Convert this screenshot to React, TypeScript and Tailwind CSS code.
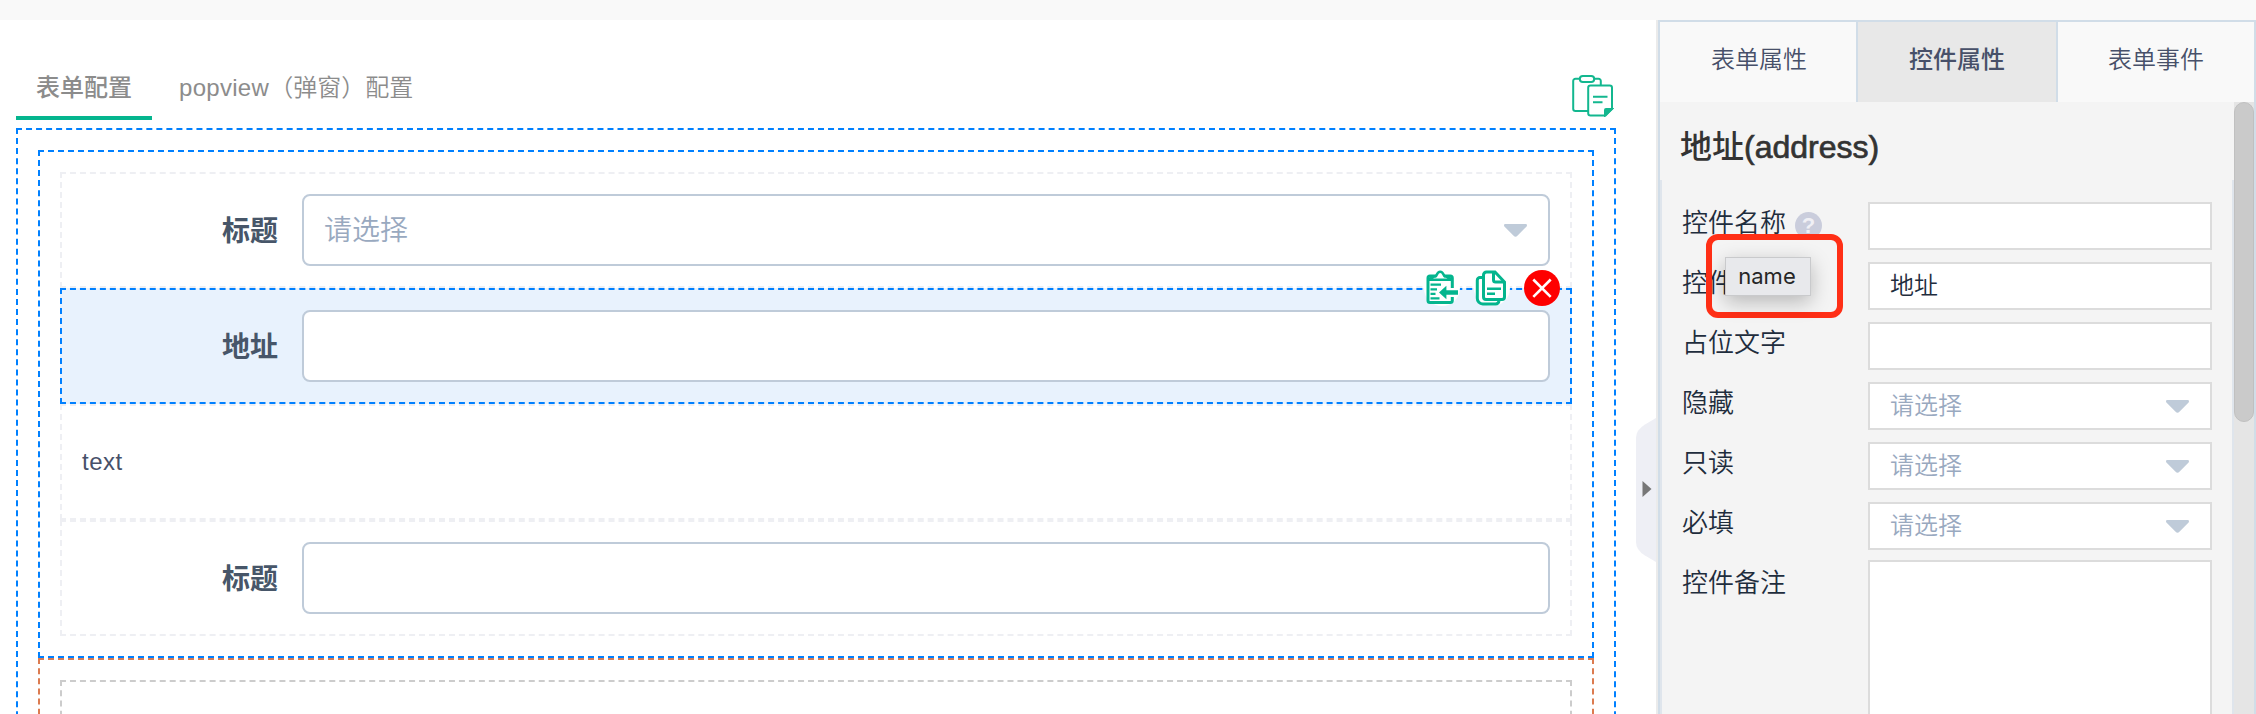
import React from "react";

const rows = [
  { label: "控件名称", kind: "text", value: "", help: true },
  { label: "控件标题", kind: "text", value: "地址" },
  { label: "占位文字", kind: "text", value: "" },
  { label: "隐藏", kind: "select", value: "" },
  { label: "只读", kind: "select", value: "" },
  { label: "必填", kind: "select", value: "" },
];

function Caret() {
  return (
    <svg width="23" height="13" viewBox="0 0 23 13" fill="#bfcbd9">
      <path d="M1.200 0h20.600c1.200 0 1.500 1.600.8 2.500L13.400 11.700a2.600 2.600 0 0 1-3.800 0L.4 2.500C-.3 1.600 0 0 1.200 0z" />
    </svg>
  );
}

function PasteAllIcon() {
  return (
    <svg width="42" height="42" viewBox="0 0 42 42" fill="none" stroke="#13b78f" strokeWidth="2">
      <path d="M16 36H3.500A2.300 2.300 0 0 1 1.200 33.700V6A2.300 2.300 0 0 1 3.500 3.700H8M22 3.700h4.500A2.300 2.300 0 0 1 28.800 6v4" />
      <rect x="7.800" y="1" width="14.400" height="6" rx="3" />
      <path d="M18.500 10.500h19.200a2.300 2.300 0 0 1 2.300 2.300v21L33.500 40.500h-15a2.300 2.300 0 0 1-2.300-2.300V12.800a2.300 2.300 0 0 1 2.300-2.300z" />
      <path d="M21 21.800h14.500M21 27.300h9.500" />
      <path d="M33 40.500v-5.500a1 1 0 0 1 1-1h6z" fill="#13b78f" />
    </svg>
  );
}

function PasteIcon() {
  return (
    <svg width="36" height="36" viewBox="0 0 36 36" fill="none" stroke="#04b58e" strokeWidth="3">
      <circle cx="18" cy="18" r="18" fill="#fff" stroke="none" />
      <path d="M28.300 18V8a2 2 0 0 0-2-2H6a2 2 0 0 0-2 2v22.500a2 2 0 0 0 2 2h20.300a2 2 0 0 0 2-2V27" />
      <path d="M5.500 9.800c1.200-3 3.800-3 6-3.400 1.500-.4 1.200-4.700 4.700-4.700s3.200 4.300 4.700 4.700c2.200.4 4.800.4 6 3.400z" strokeWidth="2.600" fill="#fff" />
      <path d="M6.500 14.700h10.500M6.500 19.300h6.500M6.500 23.800h5M6.500 28.300h9" strokeWidth="2.200" />
      <path d="M15 22.500l7.400-6.700v4.500H34v4.400H22.400v4.500z" fill="#04b58e" stroke="none" />
    </svg>
  );
}

function CopyIcon() {
  return (
    <svg width="36" height="36" viewBox="0 0 36 36" fill="none" stroke="#04b58e" strokeWidth="3">
      <circle cx="18" cy="18" r="18" fill="#fff" stroke="none" />
      <path d="M12.500 2h8.500L30.500 12V27a2.500 2.500 0 0 1-2.500 2.500H12A2.500 2.500 0 0 1 9.500 27V5A3 3 0 0 1 12.500 2z" />
      <path d="M19.500 2.500V10a2 2 0 0 0 2 2h8.500" />
      <path d="M8.500 7.500H6A2.700 2.700 0 0 0 3.300 10.200v18A5.500 5.500 0 0 0 8.800 33.900h12.700A3.500 3.500 0 0 0 25 31" />
      <path d="M13 18.700h14M13 23.700h8" strokeWidth="2.600" />
    </svg>
  );
}

function DeleteIcon() {
  return (
    <svg width="36" height="36" viewBox="0 0 36 36">
      <circle cx="18" cy="18" r="18" fill="#fe0000" />
      <path d="M9.300 9.500l17.400 17.400M26.700 9.500L9.300 26.900" stroke="#fff" strokeWidth="2.600" />
    </svg>
  );
}

function FieldRow({ label, select, active }: { label: string; select?: boolean; active?: boolean }) {
  return (
    <div
      className={
        "relative flex h-[116px] items-center border-2 border-dashed p-5 " +
        (active ? "border-[#0080ff] bg-[#e8f2fd]" : "border-[#eeeff3]")
      }
    >
      <div className="w-[220px] shrink-0 pt-[3px] pr-6 text-right text-[28px] font-bold text-[#475669]">{label}</div>
      <div className="flex h-[72px] flex-1 items-center justify-between rounded-lg border-2 border-[#bfcbd9] bg-white pr-[21px] pl-5 text-[28px] text-[#99a9bf]">
        {select && (
          <>
            <span className="pt-0.5 font-[350]">请选择</span>
            <Caret />
          </>
        )}
      </div>
      {active && (
        <div className="absolute -top-5 right-[10px] flex gap-[14px]">
          <PasteIcon />
          <CopyIcon />
          <DeleteIcon />
        </div>
      )}
    </div>
  );
}

export default function App() {
  return (
    <div className="flex h-[714px] w-[2256px] flex-col overflow-hidden bg-white font-['Liberation_Sans','Noto_Sans_CJK_SC',sans-serif]">
      <div className="h-5 shrink-0 bg-[#f9f9f9]" />
      <div className="flex min-h-0 flex-1">
        <main className="w-[1636px] shrink-0 pl-4">
          <div className="flex h-[108px] w-[1600px] items-start justify-between">
            <nav className="flex h-[100px] text-2xl leading-[36px] text-[#8c8c8c]">
              <div className="flex w-[136px] items-end border-b-4 border-[#04b58e] pb-[10px] pl-5 font-medium">表单配置</div>
              <div className="flex items-end pb-[14px] pl-[27px] font-[350]">
                <span className="tracking-[0.3px]">popview</span>（弹窗）配置
              </div>
            </nav>
            <div className="pt-[55px] pr-0.5">
              <PasteAllIcon />
            </div>
          </div>
          <div className="h-[700px] w-[1600px] border-2 border-dashed border-[#0080ff] p-5">
            <div className="border-2 border-dashed border-[#0080ff] p-5">
              <FieldRow label="标题" select />
              <FieldRow label="地址" active />
              <div className="flex h-[116px] items-center border-2 border-dashed border-[#eeeff3] px-5 text-2xl tracking-[0.5px] text-[#475069]">text</div>
              <FieldRow label="标题" />
            </div>
            <div className="h-[300px] border-2 border-dashed border-[#dc7b50] p-5">
              <div className="h-[200px] border-2 border-dashed border-[#cccccc]" />
            </div>
          </div>
        </main>

        <div className="flex w-5 shrink-0 flex-col pt-[398px]">
          <svg width="20" height="144" viewBox="0 0 20 144">
            <path d="M20 0L9 6.500Q0 12 0 20v104q0 8 9 13.500L20 144z" fill="#eeeff5" />
            <path d="M6.500 63l9 8-9 8z" fill="#777" />
          </svg>
        </div>

        <aside className="flex w-[600px] shrink-0 flex-col border-l-2 border-[#ebebeb]">
          <div className="flex min-h-0 flex-1 flex-col border-2 border-b-0 border-[#d1dde8]">
            <div className="flex h-20 shrink-0 bg-[#f9f9f9] text-center text-2xl leading-[76px] text-[#475069]">
              <div className="w-[196px] pl-0.5 font-[350]">表单属性</div>
              <div className="w-[202px] border-x-2 border-[#d1dde8] bg-[#e8e8e8] font-medium">控件属性</div>
              <div className="flex-1 font-[350]">表单事件</div>
            </div>
            <div className="flex min-h-0 flex-1 bg-[#f4f4f4]">
              <div className="flex w-[574px] flex-col">
                <h2 className="h-[78px] shrink-0 pt-[21px] pl-[20px] text-[32px] leading-[48px] font-medium text-[#333]">
                  地址<span className="[-webkit-text-stroke:0.7px_#333]">(address)</span>
                </h2>
                <div className="flex-1 border-x-2 border-[#dfe5ec] pt-[22px] pr-5 pl-5 font-[350] text-[#1f2d3d]">
                  {rows.map((r) => (
                    <div key={r.label} className="flex h-[60px]">
                      <div className="flex h-[43px] w-[186px] items-center text-[26px]">
                        {r.label}
                        {r.help && (
                          <span className="mt-[3px] ml-[9px] flex size-[27px] shrink-0 items-center justify-center rounded-full bg-[#cacddc] text-[22px] font-bold text-[#f0f0f5]">?</span>
                        )}
                      </div>
                      <div className="flex h-12 flex-1 items-center justify-between border-2 border-[#dcdcdc] bg-white pr-[21px] pl-5 text-2xl">
                        {r.kind === "select" ? (
                          <>
                            <span className="text-[#99a9bf]">请选择</span>
                            <Caret />
                          </>
                        ) : (
                          <span>{r.value}</span>
                        )}
                      </div>
                    </div>
                  ))}
                  <div className="flex">
                    <div className="flex h-[43px] w-[186px] items-center text-[26px]">控件备注</div>
                    <div className="-mt-0.5 h-[200px] flex-1 border-2 border-[#dcdcdc] bg-white" />
                  </div>
                </div>
              </div>
              <div className="w-5 bg-[#e5e5e5]">
                <div className="h-80 w-5 rounded-full border border-[#c0c0c0] bg-[#cacaca]" />
              </div>
            </div>
          </div>
        </aside>
      </div>

      <div className="absolute top-[234px] left-[1706px] h-[84px] w-[137px] rounded-[12px] border-[6px] border-[#ff2f16]">
        <div className="absolute top-[17px] left-[13px] flex h-[39px] w-[86px] items-center justify-center border border-[#c9cacc] bg-[#e8e9ec] pr-0.5 font-['Inter',sans-serif] text-[22px] text-[#262626] shadow-[0_6px_20px_rgba(0,0,0,0.25)]">
          name
        </div>
      </div>
    </div>
  );
}
